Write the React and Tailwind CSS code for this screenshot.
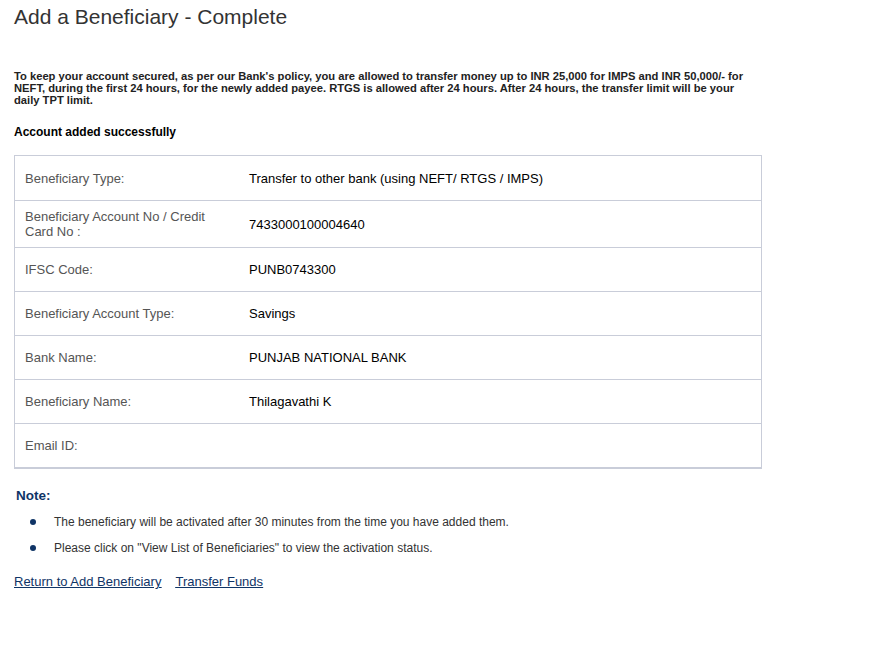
export default function App() {
  const rows = [
    ["Beneficiary Type:", "Transfer to other bank (using NEFT/ RTGS / IMPS)"],
    ["Beneficiary Account No / Credit Card No :", "7433000100004640"],
    ["IFSC Code:", "PUNB0743300"],
    ["Beneficiary Account Type:", "Savings"],
    ["Bank Name:", "PUNJAB NATIONAL BANK"],
    ["Beneficiary Name:", "Thilagavathi K"],
    ["Email ID:", ""],
  ];
  return (
    <div className="w-[895px] h-[652px] bg-white font-['Liberation_Sans',Arial,sans-serif] text-black">
      <div className="pl-[14px] pt-[4px]">
        <h1 className="text-[21px] leading-[26px] text-[#333]">Add a Beneficiary - Complete</h1>
        <p className="mt-[40px] w-[760px] text-[11.2px] leading-[12px] font-bold text-[#222]">
          To keep your account secured, as per our Bank's policy, you are allowed to transfer money up to INR 25,000 for IMPS and INR 50,000/- for
          <br />
          NEFT, during the first 24 hours, for the newly added payee. RTGS is allowed after 24 hours. After 24 hours, the transfer limit will be your
          <br />
          daily TPT limit.
        </p>
        <p className="mt-[18px] text-[12px] leading-[16px] font-bold">Account added successfully</p>
        <div className="mt-[15px] w-[748px] border border-[#c9cdd9] border-b-2">
          {rows.map(([l, v], i) => (
            <div
              key={i}
              className={`flex items-center ${i > 0 ? "border-t border-[#c9cdd9]" : ""} ${i === 1 ? "h-[47px]" : "h-[44px]"}`}
            >
              <div className="w-[234px] pl-[10px] pr-[26px] text-[13px] leading-[15px] text-[#555]">{l}</div>
              <div className="text-[13px] leading-[15px] text-black">{v}</div>
            </div>
          ))}
        </div>
        <div className="mt-[19px] pl-[2px] text-[13.5px] leading-[16px] font-bold text-[#0f3466]">Note:</div>
        <ul className="mt-[5px]">
          <li className="flex items-center h-[26px] text-[12px] text-[#333]">
            <span className="w-[6px] h-[6px] rounded-full bg-[#0f3466] ml-[16px] mr-[18px]"></span>
            The beneficiary will be activated after 30 minutes from the time you have added them.
          </li>
          <li className="flex items-center h-[26px] text-[12px] text-[#333]">
            <span className="w-[6px] h-[6px] rounded-full bg-[#0f3466] ml-[16px] mr-[18px]"></span>
            Please click on "View List of Beneficiaries" to view the activation status.
          </li>
        </ul>
        <div className="mt-[13px] flex gap-[14px] text-[13px] leading-[16px] text-[#0f3466] underline">
          <a href="#">Return to Add Beneficiary</a>
          <a href="#">Transfer Funds</a>
        </div>
      </div>
    </div>
  );
}
